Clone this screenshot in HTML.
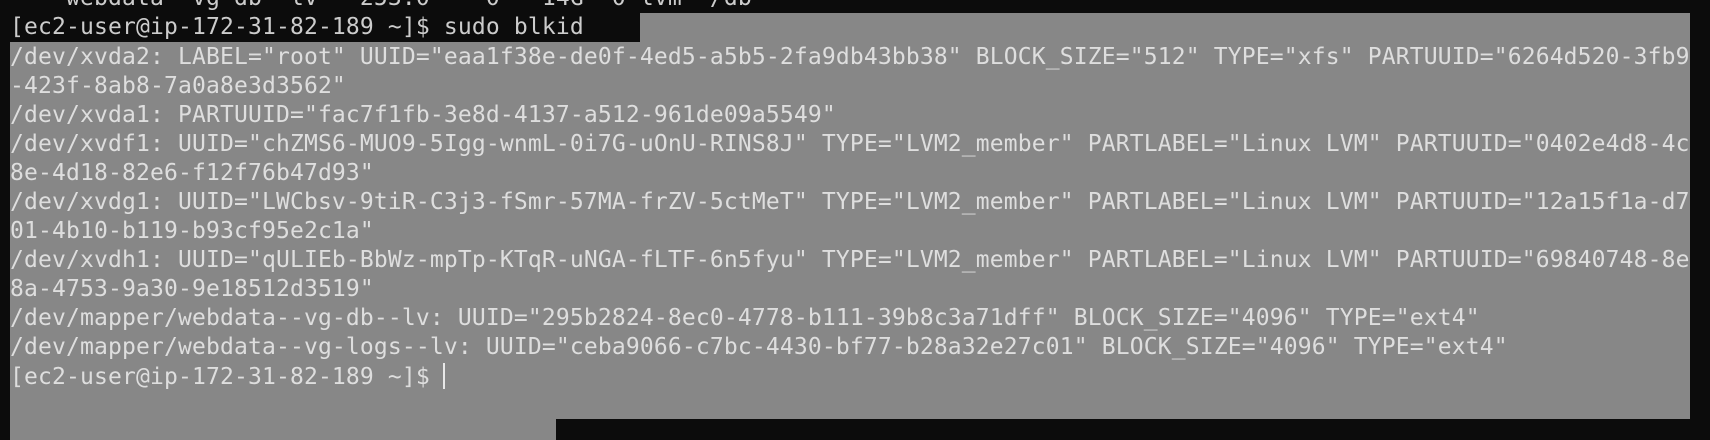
<!DOCTYPE html>
<html><head><meta charset="utf-8"><style>
html,body{margin:0;padding:0;width:1710px;height:440px;overflow:hidden;background:#0c0c0c}
.g{position:absolute;background:#878787}
pre{position:absolute;left:10px;top:-15.7px;margin:0;font-family:"DejaVu Sans Mono","Liberation Mono",monospace;font-size:23px;letter-spacing:0.15px;line-height:29.1px;color:#dedede;white-space:pre;width:1680px;overflow:hidden}
.c{position:absolute;left:443px;top:363px;width:2px;height:26px;background:#e8e8e8}
</style></head><body>
<div class="g" style="left:640px;top:13px;width:1050px;height:30px"></div>
<div class="g" style="left:10px;top:42px;width:1680px;height:377px"></div>
<div class="g" style="left:10px;top:418px;width:546px;height:22px"></div>
<pre><span style="color:#cccccc">  └─webdata--vg-db--lv   253:0    0   14G  0 lvm  /db
[ec2-user@ip-172-31-82-189 ~]$ sudo blkid</span>
/dev/xvda2: LABEL="root" UUID="eaa1f38e-de0f-4ed5-a5b5-2fa9db43bb38" BLOCK_SIZE="512" TYPE="xfs" PARTUUID="6264d520-3fb9
-423f-8ab8-7a0a8e3d3562"
/dev/xvda1: PARTUUID="fac7f1fb-3e8d-4137-a512-961de09a5549"
/dev/xvdf1: UUID="chZMS6-MUO9-5Igg-wnmL-0i7G-uOnU-RINS8J" TYPE="LVM2_member" PARTLABEL="Linux LVM" PARTUUID="0402e4d8-4c
8e-4d18-82e6-f12f76b47d93"
/dev/xvdg1: UUID="LWCbsv-9tiR-C3j3-fSmr-57MA-frZV-5ctMeT" TYPE="LVM2_member" PARTLABEL="Linux LVM" PARTUUID="12a15f1a-d7
01-4b10-b119-b93cf95e2c1a"
/dev/xvdh1: UUID="qULIEb-BbWz-mpTp-KTqR-uNGA-fLTF-6n5fyu" TYPE="LVM2_member" PARTLABEL="Linux LVM" PARTUUID="69840748-8e
8a-4753-9a30-9e18512d3519"
/dev/mapper/webdata--vg-db--lv: UUID="295b2824-8ec0-4778-b111-39b8c3a71dff" BLOCK_SIZE="4096" TYPE="ext4"
/dev/mapper/webdata--vg-logs--lv: UUID="ceba9066-c7bc-4430-bf77-b28a32e27c01" BLOCK_SIZE="4096" TYPE="ext4"
[ec2-user@ip-172-31-82-189 ~]$ </pre>
<div class="c"></div>
</body></html>
